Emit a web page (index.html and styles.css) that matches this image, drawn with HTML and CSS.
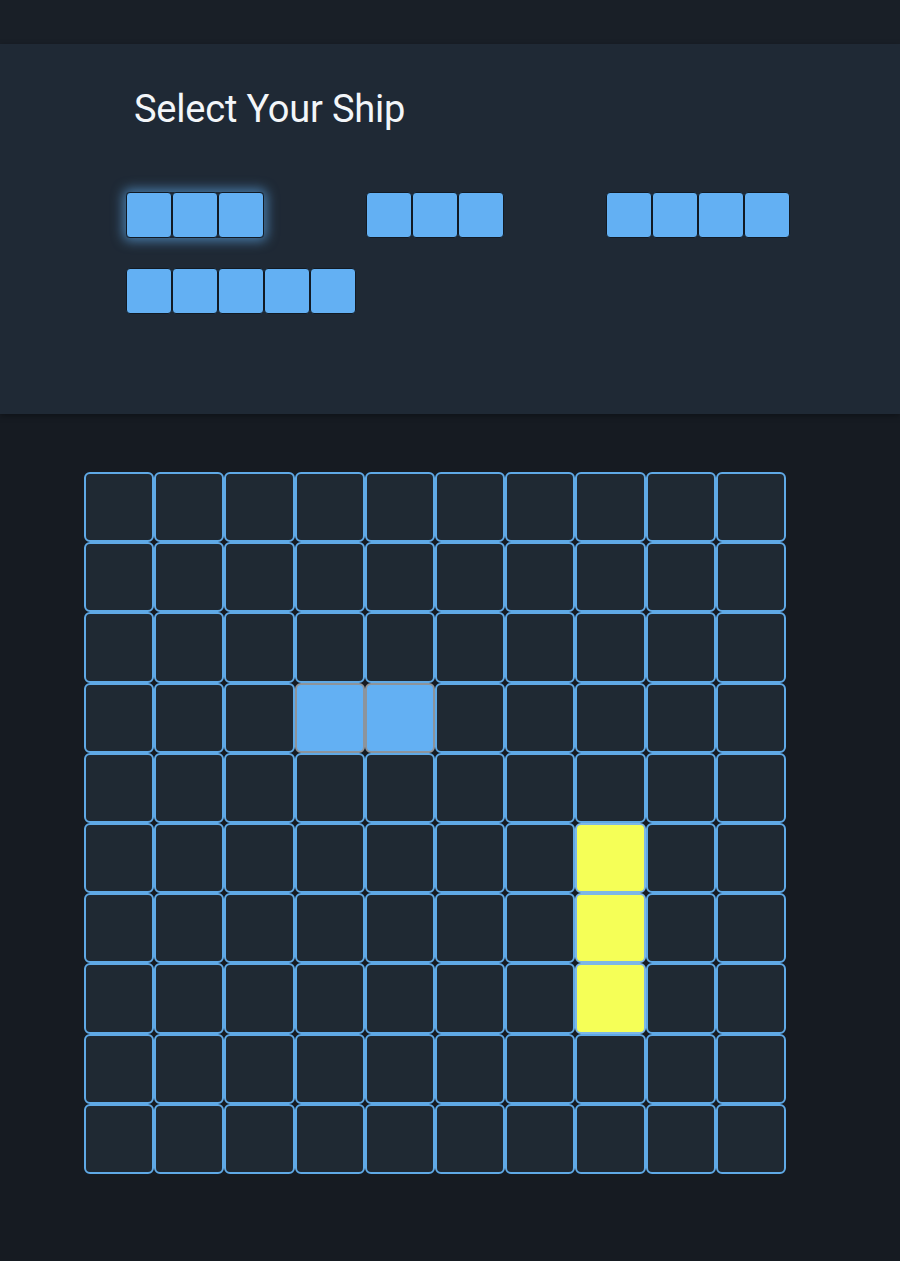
FILE: index.html
```html
<!DOCTYPE html>
<html lang="en">
<head>
<meta charset="utf-8">
<title>Select Your Ship</title>
<link rel="stylesheet" href="styles.css">
</head>
<body>
<div class="topbar"></div>
<section class="panel">
  <h1 class="title">Select Your Ship</h1>
  <div class="ships">
    <div class="ship selected"><span></span><span></span><span></span></div>
    <div class="ship"><span></span><span></span><span></span></div>
    <div class="ship"><span></span><span></span><span></span><span></span></div>
    <div class="ship"><span></span><span></span><span></span><span></span><span></span></div>
  </div>
</section>
<main class="board-wrap">
  <div class="board" id="board"></div>
</main>
<script>
  var board = document.getElementById('board');
  for (var r = 0; r < 10; r++) {
    for (var c = 0; c < 10; c++) {
      var d = document.createElement('div');
      d.className = 'cell';
      if (r === 3 && (c === 3 || c === 4)) d.className += ' placed';
      if (c === 7 && r >= 5 && r <= 7) d.className += ' preview';
      board.appendChild(d);
    }
  }
</script>
</body>
</html>
```

FILE: styles.css
```css
* { box-sizing: border-box; }
html, body { margin: 0; padding: 0; }
body {
  background: #161b22;
  font-family: Roboto, "Open Sans", sans-serif;
  color: #f3f6f9;
  min-height: 1261px;
}
.topbar {
  height: 44px;
  background: #191f27;
}
.panel {
  height: 370px;
  background: #1f2935;
  padding: 0 0 0 126px;
  box-shadow: 0 2px 6px rgba(0,0,0,0.35);
  position: relative;
}
.title {
  margin: 0;
  padding: 40px 0 0 8px;
  font-size: 38px;
  line-height: 50px;
  font-weight: 400;
  letter-spacing: -0.2px;
}
.ships {
  margin-top: 58px;
  display: grid;
  grid-template-columns: 240px 240px 240px;
  row-gap: 30px;
  align-items: start;
}
.ship {
  display: flex;
  width: max-content;
  border-radius: 4px;
}
.ship span {
  width: 46px;
  height: 46px;
  background: #63b0f3;
  border: 1.5px solid #111a24;
  border-radius: 4px;
}
.ship.selected {
  box-shadow: 0 0 12px 3px rgba(99, 176, 243, 0.6);
}
.board-wrap {
  padding: 58px 0 0 84px;
}
.board {
  display: grid;
  grid-template-columns: repeat(10, 70.2px);
  grid-auto-rows: 70.2px;
  width: max-content;
}
.cell {
  background: #1f2933;
  border: 2px solid #5fa9e6;
  border-radius: 6px;
}
.cell.placed {
  background: #63b0f3;
  border-color: #8c949c;
}
.cell.preview {
  background: #f5ff57;
  border-color: #7db7e6;
}
```
